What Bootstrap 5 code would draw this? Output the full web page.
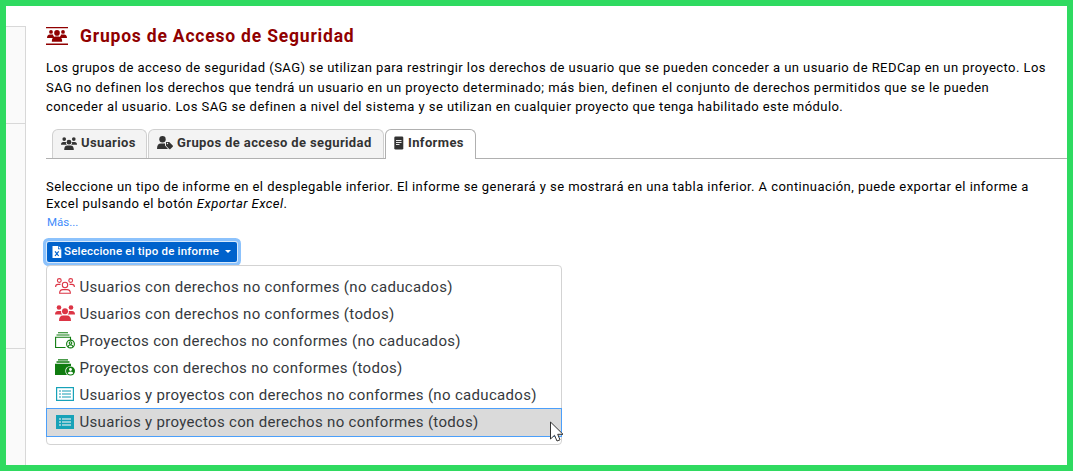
<!DOCTYPE html>
<html lang="es">
<head>
<meta charset="utf-8">
<title>Grupos de Acceso de Seguridad</title>
<link href="https://cdn.jsdelivr.net/npm/bootstrap@5.3.0/dist/css/bootstrap.min.css" rel="stylesheet">
<style>
body{font-family:Roboto,"Liberation Sans",sans-serif;font-size:13px;color:#000;background:#fff}
.frame{height:471px;border:6px solid #2fda60}
.side{width:20px;margin-top:20px;background:#fafafa;border-top:1px solid #d8d8d8;border-right:1px solid #d8d8d8}
.side-a{height:97px;border-bottom:1px solid #d8d8d8}
.side-b{height:225px;border-bottom:1px solid #d8d8d8}
.main{padding:20px 0 0 20px;min-width:0}
.title{height:21px;color:#900000}
.title h1{font-size:17.5px;font-weight:700;line-height:21px;letter-spacing:.8px;margin:0 0 0 12px}
.ln{display:block;white-space:nowrap;letter-spacing:.44px}
.ln-wide{letter-spacing:.465px}
.intro{line-height:19.5px;margin-top:11px;height:59px}
.tabs{height:30px;margin-top:12px;padding-left:6px;border-bottom:1px solid #b0b0b0;gap:1px;flex-wrap:nowrap}
.tabs .nav-link{height:29px;padding:0 0 2px 8px;border:1px solid #d0d0d0;border-bottom:0;border-radius:6px 6px 0 0;background:#f3f3f3;color:#333;font-weight:700;letter-spacing:.38px;line-height:24px;white-space:nowrap;display:flex;align-items:center;margin:0}
.tabs .nav-link.active{height:30px;padding-bottom:3px;background:#fff;color:#333;border-color:#b0b0b0}
.tabs .nav-link svg{flex:none}
.desc{line-height:17px;margin-top:19px}
.more{font-size:11.5px;line-height:17px;color:#3e8bfb;text-decoration:none;display:block;margin:2px 0 0 1px}
.report{width:190px;height:20px;margin:11px 0 0 1px;padding:0 0 1px 5px;border:0;border-radius:2px;background:#0062cc;color:#fff;font-size:11.5px;font-weight:500;letter-spacing:.2px;line-height:17px;box-shadow:0 0 0 1px #d9e9fa,0 0 0 4px #8cc2fc;display:flex;align-items:center;white-space:nowrap}
.report:hover{background:#0062cc;color:#fff}
.report.dropdown-toggle::after{border-top-width:3px;border-left-width:3px;border-right-width:3px;margin-left:6px}
.reports{position:absolute;top:23px;left:0;width:516px;height:180px;padding:7px 0 0;border:1px solid #d3d3d3;border-radius:4px;font-size:15px}
.reports .dropdown-item{height:27px;padding:1px 0 0 7px;border:1px solid transparent;line-height:25px;letter-spacing:.32px;color:#35393d;display:flex;align-items:center}
.reports .dropdown-item.on{height:29px;padding:0 0 0 8px;background:#dadada;border-color:#4b9ffa;margin-left:-1px;width:516px}
.reports .dropdown-item svg{flex:none;margin:-2px 4.5px 0 0}
.pointer{position:absolute;left:502px;top:155px}
</style>
</head>
<body>
<svg width="0" height="0" class="position-absolute"><defs>
<symbol id="crowd" viewBox="0 0 20 16"><circle cx="4" cy="2.5" r="2.3"/><circle cx="16" cy="2.5" r="2.3"/><path d="M0 9.5Q0 6 3 6H6.2Q5.6 8 7.2 9.5ZM20 9.5Q20 6 17 6H13.8Q14.4 8 12.8 9.5Z"/><circle cx="10" cy="6.3" r="3"/><path d="M4 16Q4 10.5 8 10.5H12Q16 10.5 16 16Z"/></symbol>
</defs></svg>
<div class="frame d-flex overflow-hidden">
<aside class="side flex-shrink-0"><div class="side-a"></div><div class="side-b"></div></aside>
<main class="main flex-grow-1">
<div class="title d-flex align-items-center">
<svg width="22" height="18" viewBox="0 0 22 18" fill="currentColor" style="margin-top:-2px"><path d="M0 0H22V1.3H0ZM0 16.5H22V18H0Z"/><circle cx="5" cy="4.9" r="1.9"/><circle cx="17" cy="4.9" r="1.9"/><circle cx="11" cy="5.9" r="2.8"/><path d="M1 11Q1 7.4 4 7.4H7Q7.2 9 8.4 9.7L6 11ZM21 11Q21 7.4 18 7.4H15Q14.8 9 13.6 9.7L16 11ZM5.8 14.8Q5.8 9.8 9.5 9.6H12.5Q16.2 9.8 16.2 14.8Z"/></svg>
<h1>Grupos de Acceso de Seguridad</h1></div>
<div class="intro">
<span class="ln">Los grupos de acceso de seguridad (SAG) se utilizan para restringir los derechos de usuario que se pueden conceder a un usuario de REDCap en un proyecto. Los</span>
<span class="ln ln-wide">SAG no definen los derechos que tendrá un usuario en un proyecto determinado; más bien, definen el conjunto de derechos permitidos que se le pueden</span>
<span class="ln">conceder al usuario. Los SAG se definen a nivel del sistema y se utilizan en cualquier proyecto que tenga habilitado este módulo.</span>
</div>
<nav class="tabs nav nav-tabs">
<a class="nav-link" style="width:95px"><svg class="me-1" width="16" height="13" viewBox="0 0 20 16" fill="currentColor"><use href="#crowd"/></svg><span>Usuarios</span></a>
<a class="nav-link" style="width:236px"><svg class="me-1" width="16" height="14" viewBox="0 0 16 14" fill="currentColor"><circle cx="5.5" cy="3.3" r="3.2"/><path d="M0 13Q0 7.6 4 7.6H8V9.5L11 13Z"/><path d="M9 6H12.2L15.7 9.5Q16.2 10.2 15.7 10.8L13.4 13Q12.8 13.4 12.2 13L9 9.8Z"/><circle cx="10.5" cy="7.5" r=".7" fill="#f3f3f3"/></svg><span>Grupos de acceso de seguridad</span></a>
<a class="nav-link active" style="width:91px"><svg width="10" height="14" viewBox="0 0 10 14" style="margin-right:4px"><rect x=".3" y=".5" width="9" height="13" rx="1.3" fill="#333"/><path d="M2 4.5H7.5M2 6.5H7.5M2 8.5H5.5" stroke="#fff" stroke-width=".9"/></svg><span>Informes</span></a>
</nav>
<div class="desc">
<span class="ln">Seleccione un tipo de informe en el desplegable inferior. El informe se generará y se mostrará en una tabla inferior. A continuación, puede exportar el informe a</span>
<span class="ln">Excel pulsando el botón <em>Exportar Excel</em>.</span>
</div>
<a class="more" href="#">Más...</a>
<div class="dropdown">
<button class="report btn dropdown-toggle" type="button"><svg width="10" height="12" viewBox="0 0 10 12" style="margin-right:2px"><path d="M.5 0H6V3.2H9.3V12H.5ZM6.7 0L9.3 2.6H6.7Z" fill="#fff"/><path d="M3 5.3L6.7 10M6.7 5.3L3 10" stroke="#0062cc" stroke-width="1.2"/></svg><span>Seleccione el tipo de informe</span></button>
<div class="reports dropdown-menu show">
<a class="dropdown-item"><svg width="20" height="16" viewBox="0 0 20 16" fill="none" stroke="#dc3545" stroke-width="1.1"><circle cx="4.3" cy="2.5" r="1.9"/><circle cx="15.7" cy="2.5" r="1.9"/><circle cx="10" cy="7" r="2.7"/><path d="M.6 9Q.6 6.4 3 6.4H5.5M19.4 9Q19.4 6.4 17 6.4H14.5M4.6 15.3Q4.6 11.6 8 11.6H12Q15.4 11.6 15.4 15.3Z"/></svg><span>Usuarios con derechos no conformes (no caducados)</span></a>
<a class="dropdown-item"><svg width="20" height="16" fill="#dc3545"><use href="#crowd"/></svg><span>Usuarios con derechos no conformes (todos)</span></a>
<a class="dropdown-item"><svg width="20" height="17" viewBox="0 0 20 17" fill="none" stroke="#107c10" stroke-width="1.1"><path d="M3 .8H13M1.5 3H14.5M10.5 15.5H.6V5.3H15.5V8"/><circle cx="15.5" cy="12" r="3.9"/><circle cx="15.5" cy="11" r="1.3"/><path d="M13 15Q13 13 15.5 13T18 15"/></svg><span>Proyectos con derechos no conformes (no caducados)</span></a>
<a class="dropdown-item"><svg width="20" height="17" viewBox="0 0 20 17" fill="#107c10"><path d="M3 .2H13V1.4H3ZM1.5 2.2H14.5V3.7H1.5ZM0 4.7H16V7Q10 7.5 10.3 12Q10.3 14.5 12 16H0Z"/><circle cx="15.5" cy="12" r="4.5"/><circle cx="15.5" cy="10.5" r="1.4" fill="#fff"/><path d="M12.8 14.5Q13 12.5 15.5 12.5T18.2 14.5Q15.5 16.5 12.8 14.5Z" fill="#fff"/></svg><span>Proyectos con derechos no conformes (todos)</span></a>
<a class="dropdown-item"><svg width="20" height="14" viewBox="0 0 20 14"><rect x="1.6" y=".6" width="16.8" height="12.8" fill="#fff" stroke="#17a2b8" stroke-width="1.2"/><path d="M4 4H6M7 4H16M4 7H6M7 7H16M4 10H6M7 10H16" stroke="#62bfcd" stroke-width="1.3"/></svg><span>Usuarios y proyectos con derechos no conformes (no caducados)</span></a>
<a class="dropdown-item on"><svg width="20" height="14" viewBox="0 0 20 14"><path d="M1 0H19V14H1Z" fill="#17a2b8"/><path d="M4 4H6M7 4H16M4 7H6M7 7H16M4 10H6M7 10H16" stroke="#b9dce1" stroke-width="1.3"/></svg><span>Usuarios y proyectos con derechos no conformes (todos)</span></a>
<svg class="pointer" width="16" height="22" viewBox="0 0 16 22"><path d="M1.5 1V18L5.5 14.3L8 20L11 18.8L8.7 13.3H14Z" fill="#fff" stroke="#333"/></svg>
</div></div>
</main></div>
<script src="https://cdn.jsdelivr.net/npm/bootstrap@5.3.0/dist/js/bootstrap.bundle.min.js"></script>
</body>
</html>
